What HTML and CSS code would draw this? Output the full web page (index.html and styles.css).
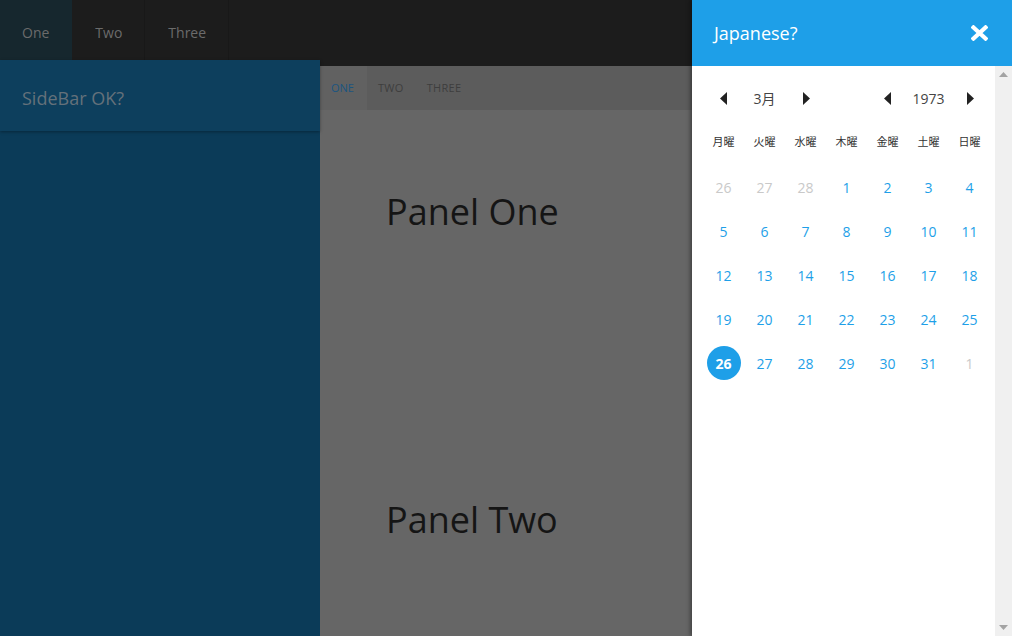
FILE: index.html
```html
<!DOCTYPE html>
<html lang="ja">
<head>
<meta charset="utf-8">
<title>Japanese calendar</title>
<link rel="stylesheet" href="styles.css">
</head>
<body>
<div class="app">
  <header class="topbar">
    <nav class="toptabs">
      <div class="toptab active">One</div>
      <div class="toptab">Two</div>
      <div class="toptab">Three</div>
    </nav>
  </header>
  <div class="below">
    <aside class="sidebar">
      <div class="sidebar-head">SideBar OK?</div>
      <div class="sidebar-body"></div>
    </aside>
    <main class="main">
      <nav class="subtabs">
        <div class="subtab active">ONE</div>
        <div class="subtab">TWO</div>
        <div class="subtab">THREE</div>
      </nav>
      <section class="panel"><h1>Panel One</h1></section>
      <section class="panel"><h1>Panel Two</h1></section>
    </main>
  </div>
</div>

<div class="drawer">
  <div class="drawer-head">
    <span class="drawer-title">Japanese?</span>
    <svg class="close" width="17" height="16" viewBox="0 0 17 16"><path d="M2.5 2.5 L14.5 13.5 M14.5 2.5 L2.5 13.5" stroke="#fff" stroke-width="4.2" stroke-linecap="square" fill="none"/></svg>
  </div>
  <div class="drawer-body">
    <div class="calendar">
      <div class="cal-nav">
        <span class="arrow"><svg width="7" height="13" viewBox="0 0 7 13"><path d="M7 0 L0 6.5 L7 13 Z" fill="#222"/></svg></span>
        <span class="nav-label">3月</span>
        <span class="arrow next"><svg width="7" height="13" viewBox="0 0 7 13"><path d="M0 0 L7 6.5 L0 13 Z" fill="#222"/></svg></span>
        <span></span>
        <span class="arrow"><svg width="7" height="13" viewBox="0 0 7 13"><path d="M7 0 L0 6.5 L7 13 Z" fill="#222"/></svg></span>
        <span class="nav-label">1973</span>
        <span class="arrow next"><svg width="7" height="13" viewBox="0 0 7 13"><path d="M0 0 L7 6.5 L0 13 Z" fill="#222"/></svg></span>
      </div>
      <div class="cal-week">
        <span>月曜</span><span>火曜</span><span>水曜</span><span>木曜</span><span>金曜</span><span>土曜</span><span>日曜</span>
      </div>
      <div class="cal-days">
        <span class="day other">26</span><span class="day other">27</span><span class="day other">28</span><span class="day">1</span><span class="day">2</span><span class="day">3</span><span class="day">4</span>
        <span class="day">5</span><span class="day">6</span><span class="day">7</span><span class="day">8</span><span class="day">9</span><span class="day">10</span><span class="day">11</span>
        <span class="day">12</span><span class="day">13</span><span class="day">14</span><span class="day">15</span><span class="day">16</span><span class="day">17</span><span class="day">18</span>
        <span class="day">19</span><span class="day">20</span><span class="day">21</span><span class="day">22</span><span class="day">23</span><span class="day">24</span><span class="day">25</span>
        <span class="day"><b class="selected">26</b></span><span class="day">27</span><span class="day">28</span><span class="day">29</span><span class="day">30</span><span class="day">31</span><span class="day other">1</span>
      </div>
    </div>
    <div class="scrollbar">
      <svg width="9" height="5" viewBox="0 0 9 5"><path d="M0 5 L4.5 0 L9 5 Z" fill="#a3a3a3"/></svg>
      <svg width="9" height="5" viewBox="0 0 9 5"><path d="M0 0 L4.5 5 L9 0 Z" fill="#a3a3a3"/></svg>
    </div>
  </div>
</div>
</body>
</html>
```
FILE: styles.css
```css
html, body {
  margin: 0;
  padding: 0;
  width: 1012px;
  height: 636px;
  overflow: hidden;
  font-family: "Open Sans", "Noto Sans CJK JP", sans-serif;
}

.app {
  display: flex;
  flex-direction: column;
  height: 636px;
  background: #666666;
}

.topbar {
  height: 66px;
  background: #1c1c1c;
  flex-shrink: 0;
}

.toptabs {
  display: flex;
  height: 100%;
}

.toptab {
  padding: 0 22px 0 23px;
  line-height: 66px;
  height: 66px;
  font-size: 14px;
  color: #6b6b6b;
  border-right: 1px solid #181818;
}

.toptab.active {
  background: #16272e;
  height: 60px;
  line-height: 66px;
  padding: 0 23px 0 22px;
  border-right: none;
}

.below {
  display: flex;
  flex: 1;
  min-height: 0;
}

.sidebar {
  width: 320px;
  flex-shrink: 0;
  margin-top: -6px;
  display: flex;
  flex-direction: column;
  background: #0b3b58;
  position: relative;
  z-index: 1;
}

.sidebar-head {
  height: 71px;
  line-height: 76px;
  padding-left: 22px;
  font-size: 18px;
  color: #64717a;
  background: #0d3f5d;
  box-shadow: 0 1px 3px rgba(0, 0, 0, 0.35);
}

.sidebar-body {
  flex: 1;
}

.main {
  flex: 1;
  background: #666666;
  display: flex;
  flex-direction: column;
  overflow: hidden;
  min-height: 0;
}

.subtabs {
  display: flex;
  height: 44px;
  flex-shrink: 0;
  background: #5c5c5c;
}

.subtab {
  padding: 0 12px 0 11px;
  line-height: 44px;
  font-size: 11px;
  color: #3e3e3e;
  letter-spacing: 0.3px;
}

.subtab.active {
  background: #616161;
  color: #1b5580;
  padding: 0 13px 0 11px;
  letter-spacing: 0;
}

.panel {
  height: 308px;
  flex-shrink: 0;
  padding-left: 66px;
  box-sizing: border-box;
  padding-top: 78px;
}

.panel h1 {
  margin: 0;
  font-weight: 400;
  font-size: 36px;
  line-height: 48px;
  color: #151515;
}

/* drawer */
.drawer {
  position: absolute;
  top: 0;
  right: 0;
  width: 320px;
  height: 636px;
  display: flex;
  flex-direction: column;
  background: #ffffff;
  box-shadow: -2px 0 4px rgba(0, 0, 0, 0.35);
  z-index: 5;
}

.drawer-head {
  height: 66px;
  flex-shrink: 0;
  background: #1e9fe8;
  display: flex;
  align-items: center;
  justify-content: space-between;
  padding: 0 24px 0 22px;
}

.drawer-title {
  color: #ffffff;
  font-size: 18px;
}

.close {
  display: block;
}

.drawer-body {
  flex: 1;
  display: flex;
  min-height: 0;
}

.calendar {
  flex: 1;
  padding: 10px 5px 0 11px;
}

.cal-nav,
.cal-week,
.cal-days {
  display: grid;
  grid-template-columns: repeat(7, 41px);
}

.cal-nav {
  height: 44px;
  align-items: center;
  justify-items: center;
}

.arrow {
  display: flex;
  align-items: center;
}

.arrow.next {
  margin-left: 2px;
}

.arrow svg {
  display: block;
}

.nav-label {
  font-size: 14px;
  color: #444444;
}

.cal-week {
  height: 42px;
  margin-bottom: 3px;
  align-items: center;
  justify-items: center;
}

.cal-week span {
  font-family: "Noto Sans CJK JP", sans-serif;
  font-size: 11px;
  color: #333333;
}

.cal-days {
  grid-auto-rows: 44px;
  align-items: center;
  justify-items: center;
}

.day {
  font-size: 14px;
  color: #1e9fe8;
  display: flex;
  align-items: center;
  justify-content: center;
  width: 34px;
  height: 34px;
}

.day.other {
  color: #c9c9c9;
}

.selected {
  width: 34px;
  height: 34px;
  border-radius: 50%;
  background: #1e9fe8;
  color: #ffffff;
  font-weight: 700;
  display: flex;
  align-items: center;
  justify-content: center;
}

.scrollbar {
  width: 17px;
  flex-shrink: 0;
  background: #f0f0f0;
  display: flex;
  flex-direction: column;
  justify-content: space-between;
  align-items: center;
  padding: 6px 0 6px;
  box-sizing: border-box;
}

.scrollbar svg {
  display: block;
}
```
